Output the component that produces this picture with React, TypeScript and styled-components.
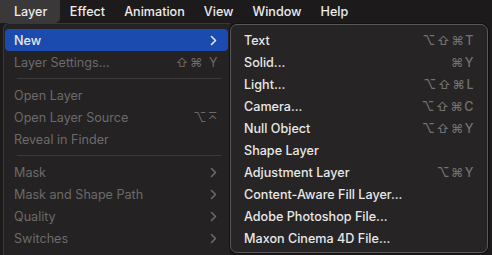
import styled, { createGlobalStyle } from "styled-components";

const GlobalStyle = createGlobalStyle`
  html, body {
    margin: 0;
    padding: 0;
    background: #1c1a1a;
    overflow: hidden;
  }
  body {
    font-family: Inter, "Liberation Sans", sans-serif;
    font-size: 13px;
    -webkit-font-smoothing: antialiased;
  }
`;

type Item =
  | { kind: "sep" }
  | { kind: "item"; label: string; shortcut?: string; sub?: boolean; disabled?: boolean; active?: boolean };

const mainItems: Item[] = [
  { kind: "item", label: "New", sub: true, active: true },
  { kind: "item", label: "Layer Settings...", shortcut: "⇧⌘ Y", disabled: true },
  { kind: "sep" },
  { kind: "item", label: "Open Layer", disabled: true },
  { kind: "item", label: "Open Layer Source", shortcut: "⌥⌅", disabled: true },
  { kind: "item", label: "Reveal in Finder", disabled: true },
  { kind: "sep" },
  { kind: "item", label: "Mask", sub: true, disabled: true },
  { kind: "item", label: "Mask and Shape Path", sub: true, disabled: true },
  { kind: "item", label: "Quality", sub: true, disabled: true },
  { kind: "item", label: "Switches", sub: true, disabled: true },
];

const subItems: Item[] = [
  { kind: "item", label: "Text", shortcut: "⌥⇧⌘T" },
  { kind: "item", label: "Solid...", shortcut: "⌘Y" },
  { kind: "item", label: "Light...", shortcut: "⌥⇧⌘L" },
  { kind: "item", label: "Camera...", shortcut: "⌥⇧⌘C" },
  { kind: "item", label: "Null Object", shortcut: "⌥⇧⌘Y" },
  { kind: "item", label: "Shape Layer" },
  { kind: "item", label: "Adjustment Layer", shortcut: "⌥⌘Y" },
  { kind: "item", label: "Content-Aware Fill Layer..." },
  { kind: "item", label: "Adobe Photoshop File..." },
  { kind: "item", label: "Maxon Cinema 4D File..." },
];

const barItems = ["Layer", "Effect", "Animation", "View", "Window", "Help"];

export default function App() {
  return (
    <>
      <GlobalStyle />
      <MenuBar>
        {barItems.map((b, i) => (
          <BarItem key={b} $open={i === 0}>
            {b}
          </BarItem>
        ))}
      </MenuBar>
      <Menus>
        <MainMenu>
          {mainItems.map((it, i) =>
            it.kind === "sep" ? (
              <Separator key={i} />
            ) : (
              <Row key={i} $active={it.active} $disabled={it.disabled}>
                <span>{it.label}</span>
                {it.shortcut && <Shortcut $disabled={it.disabled}>{it.shortcut}</Shortcut>}
                {it.sub && <Chevron />}
              </Row>
            )
          )}
        </MainMenu>
        <SubMenu>
          {subItems.map((it, i) =>
            it.kind === "item" ? (
              <Row key={i} $sub>
                <span>{it.label}</span>
                {it.shortcut && <Shortcut>{it.shortcut}</Shortcut>}
              </Row>
            ) : null
          )}
        </SubMenu>
      </Menus>
    </>
  );
}

function Chevron() {
  return (
    <ChevronSvg width="7" height="11" viewBox="0 0 7 11">
      <path d="M1.5 1.5 L5.5 5.5 L1.5 9.5" fill="none" stroke="currentColor" strokeWidth="1.6" strokeLinecap="round" strokeLinejoin="round" />
    </ChevronSvg>
  );
}

const MenuBar = styled.div`
  height: 23px;
  display: flex;
  align-items: stretch;
  background: #1c1a1a;
`;

const BarItem = styled.div<{ $open?: boolean }>`
  display: flex;
  align-items: center;
  padding: 0 9.5px;
  color: #ececec;
  font-weight: 500;
  font-size: 12.6px;
  border-radius: 0 0 5px 0;
  background: ${(p) => (p.$open ? "#3a3838" : "transparent")};
  &:first-child {
    padding: 0 13px 0 14px;
  }
`;

const Menus = styled.div`
  display: flex;
  align-items: flex-start;
  padding-left: 3px;
`;

const MainMenu = styled.div`
  width: 227px;
  height: 240px;
  background: #242222;
  border: 1px solid #3a3838;
  border-bottom: none;
  border-right: none;
  border-radius: 6px 0 0 0;
  padding: 5px 0 0 1px;
  box-sizing: border-box;
  display: flex;
  flex-direction: column;
`;

const SubMenu = styled.div`
  width: 258px;
  margin-top: 1px;
  background: #262424;
  border: 1px solid #5a5858;
  border-radius: 7px;
  padding: 4px 0 3px;
  box-sizing: border-box;
  display: flex;
  flex-direction: column;
  box-shadow: 0 0 0 1px #111;
`;

const Row = styled.div<{ $active?: boolean; $disabled?: boolean; $sub?: boolean }>`
  height: 22px;
  display: flex;
  align-items: center;
  margin: 0 ${(p) => (p.$sub ? "5px" : "2px")} 0 ${(p) => (p.$sub ? "5px" : "0")};
  padding: 0 ${(p) => (p.$sub ? "8px" : "10px")} 0 ${(p) => (p.$sub ? "8px" : "9px")};
  border-radius: 4px;
  font-size: 12.6px;
  font-weight: ${(p) => (p.$sub || p.$active ? 500 : 400)};
  color: ${(p) => (p.$disabled ? "#6c6a6a" : "#e8e8e8")};
  background: ${(p) => (p.$active ? "#1b4bae" : "transparent")};
  & > span:first-child {
    flex: 1;
    white-space: nowrap;
  }
`;

const Shortcut = styled.span<{ $disabled?: boolean }>`
  color: ${(p) => (p.$disabled ? "#6c6a6a" : "#737171")};
  font-size: 12.5px;
  letter-spacing: 1.5px;
  margin-right: -1px;
  white-space: pre;
`;

const ChevronSvg = styled.svg`
  margin-right: 1px;
`;

const Separator = styled.div`
  height: 1px;
  background: #3b3939;
  margin: 5px 9px 5px 12px;
`;
